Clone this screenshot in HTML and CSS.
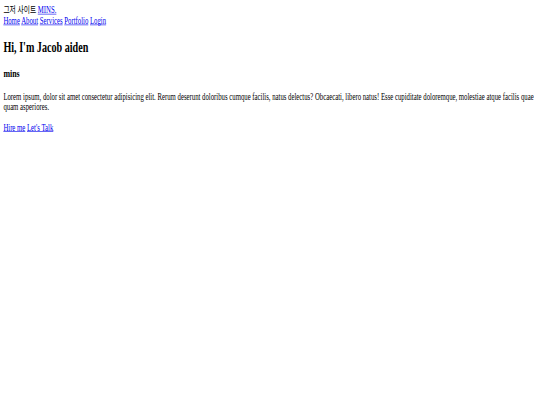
FILE: index.html
```html
<!DOCTYPE html>
<html lang="ko">
<head>
<meta charset="utf-8">
<title>MINS.</title>
<link rel="stylesheet" href="styles.css">
</head>
<body>
<div class="viewport">
  <div class="page">
    <header class="site-header">
      <div class="logo">그저 사이트 <a href="#">MINS.</a></div>
      <nav class="nav">
        <a href="#">Home</a>
        <a href="#">About</a>
        <a href="#">Services</a>
        <a href="#">Portfolio</a>
        <a href="#">Login</a>
      </nav>
    </header>
    <section class="hero">
      <h1 class="hero-title">Hi, I'm Jacob aiden</h1>
      <h3 class="hero-sub">mins</h3>
      <p class="hero-text">Lorem ipsum, dolor sit amet consectetur adipisicing elit. Rerum deserunt doloribus cumque facilis, natus delectus? Obcaecati, libero natus! Esse cupiditate doloremque, molestiae atque facilis quae quam asperiores.</p>
      <div class="hero-links">
        <a href="#">Hire me</a>
        <a href="#">Let's Talk</a>
      </div>
    </section>
  </div>
</div>
</body>
</html>
```

FILE: styles.css
```css
html, body {
  margin: 0;
  padding: 0;
  overflow: hidden;
  background: #ffffff;
}

.viewport {
  width: 540px;
  height: 405px;
  overflow: hidden;
}

.page {
  width: 1264px;
  height: 659px;
  padding: 8px;
  transform: scale(0.421875, 0.6);
  transform-origin: 0 0;
  font-family: "Liberation Serif", "Noto Sans CJK KR", serif;
  font-size: 16px;
  color: #000000;
}

.page a {
  color: #0000ee;
  text-decoration: underline;
}

.logo {
  line-height: 18.4px;
}

.nav {
  line-height: 18.4px;
}

.hero-title {
  font-size: 24px;
  font-weight: bold;
  line-height: normal;
  margin: 19.92px 0;
}

.hero-sub {
  font-size: 18.72px;
  font-weight: bold;
  margin: 18.72px 0;
}

.hero-text {
  margin: 16px 0;
}
```
